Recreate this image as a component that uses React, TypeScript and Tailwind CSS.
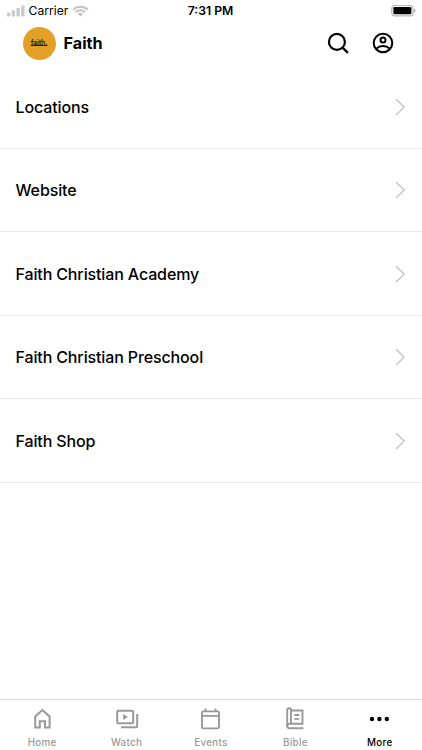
import React from "react";

const menuItems = [
  "Locations",
  "Website",
  "Faith Christian Academy",
  "Faith Christian Preschool",
  "Faith Shop",
];

const HomeIcon = () => (
  <svg width="24" height="24" viewBox="0 0 24 24" fill="none" stroke="currentColor" strokeWidth="2">
    <path d="M5.2 20.6V9.4L12.4 3l7.2 6.4v11.2H15v-6.4H9.8v6.4z" />
  </svg>
);

const WatchIcon = () => (
  <svg width="24" height="24" viewBox="0 0 24 24" fill="none" stroke="currentColor" strokeWidth="2">
    <rect x="2.2" y="3.7" width="16" height="12.6" rx="1" />
    <path d="M22.2 7v12.2a1 1 0 0 1-1 1H6" />
    <path d="M8.2 7.1v5.8l4.6-2.9z" fill="currentColor" stroke="none" />
  </svg>
);

const EventsIcon = () => (
  <svg width="24" height="24" viewBox="0 0 24 24" fill="none" stroke="currentColor" strokeWidth="1.9">
    <rect x="3" y="4.4" width="17" height="17" rx="1.4" />
    <path d="M3 8.9h17M6.5 1.4v3M16.5 1.4v3" />
  </svg>
);

const BibleIcon = () => (
  <svg width="24" height="24" viewBox="0 0 24 24" fill="none" stroke="currentColor" strokeWidth="1.9">
    <path d="M20.4 21.2H6.3a2.1 2.1 0 0 1-2.1-2.1V3.1a1.9 1.9 0 0 1 3.8 0v13.7" />
    <path d="M8 3.5h11.5v13.3H6.4A2.2 2.2 0 0 0 4.2 19" />
    <path d="M11.4 8h4.8M11.4 11.9h4.8" />
  </svg>
);

const MoreIcon = () => (
  <svg width="24" height="24" viewBox="0 0 24 24" fill="currentColor">
    <circle cx="4" cy="12" r="2.2" />
    <circle cx="11.4" cy="12" r="2.2" />
    <circle cx="18.8" cy="12" r="2.2" />
  </svg>
);

const tabs = [
  { name: "Home", icon: HomeIcon },
  { name: "Watch", icon: WatchIcon },
  { name: "Events", icon: EventsIcon },
  { name: "Bible", icon: BibleIcon },
  { name: "More", icon: MoreIcon, active: true },
];

const StatusBar = () => (
  <div className="grid h-[22px] shrink-0 grid-cols-3 items-center pl-[7px] pr-1.5">
    <div className="flex items-center">
      <svg width="18" height="12" viewBox="0 0 18 12" fill="#cbcbcb">
        <rect x="0" y="7.5" width="3.4" height="4" rx="0.8" />
        <rect x="4.7" y="5.3" width="3.4" height="6.2" rx="0.8" />
        <rect x="9.4" y="3" width="3.4" height="8.5" rx="0.8" />
        <rect x="14.1" y="0.4" width="3.4" height="11.1" rx="0.8" />
      </svg>
      <span className="ml-[3.5px] pt-px text-[12.2px]">Carrier</span>
      <svg className="ml-1" width="17" height="12" viewBox="0 0 17 12" fill="none" stroke="#c4c4c4" strokeWidth="2">
        <path d="M1.2 4.7a10.3 10.3 0 0 1 14.6 0M3.8 7.3a6.6 6.6 0 0 1 9.4 0" />
        <path d="M8.5 11.6 5.9 9a3.7 3.7 0 0 1 5.2 0z" fill="#c4c4c4" stroke="none" />
      </svg>
    </div>
    <span className="pr-0.5 pt-px text-center text-[12.2px] font-semibold">7:31 PM</span>
    <svg className="justify-self-end" width="26" height="12" viewBox="0 0 26 12">
      <rect x="1.8" y="0.5" width="21.2" height="10.4" rx="2.8" fill="none" stroke="#b5b5b5" strokeWidth="1.2" />
      <rect x="3.4" y="2.1" width="18" height="7.2" rx="1.2" fill="#000" />
      <path d="M24.3 4v3.6a2 2 0 0 0 0-3.6z" fill="#888" />
    </svg>
  </div>
);

const Header = () => (
  <header className="flex h-[43px] shrink-0 items-center pb-px pl-[22.5px] pr-[27px]">
    <div className="flex size-[33px] items-center justify-center rounded-full bg-[#e3a026]">
      <span className="text-[7.2px] font-semibold leading-none tracking-[-0.2px] text-[#2b1d05] underline decoration-[0.5px] underline-offset-0">
        faith.
      </span>
    </div>
    <h1 className="ml-2 text-[16.2px] font-bold">Faith</h1>
    <div className="ml-auto flex items-center gap-5">
      <svg width="24" height="24" viewBox="0 0 24 24" fill="none" stroke="currentColor" strokeWidth="2.2">
        <circle cx="9.9" cy="10.9" r="8" />
        <path d="m15.6 16.6 5.3 5.3" />
      </svg>
      <svg width="24" height="24" viewBox="0 0 24 24" fill="none" stroke="currentColor" strokeWidth="2">
        <circle cx="12" cy="12" r="9.3" />
        <circle cx="12" cy="9" r="2.5" />
        <path d="M5.4 17.6c3.4-3.4 9.8-3.4 13.2 0" />
      </svg>
    </div>
  </header>
);

export default function App() {
  return (
    <div className="flex h-screen w-full flex-col bg-white font-['Inter','Liberation_Sans',sans-serif] text-black">
      <StatusBar />
      <Header />
      <ul className="flex-1">
        {menuItems.map((item) => (
          <li
            key={item}
            className="flex h-[83.5px] items-center justify-between border-b border-[#e8e8e8] pl-[15.5px] pr-4 pt-px"
          >
            <span className="text-[16px] font-medium tracking-[-0.13px]">{item}</span>
            <svg width="11" height="18" viewBox="0 0 11 18" fill="none" stroke="#bdbdbd" strokeWidth="1.2">
              <path d="m1 1.2 8.2 7.9L1 17" />
            </svg>
          </li>
        ))}
      </ul>
      <nav className="grid h-[51px] shrink-0 grid-cols-5 border-t border-[#dcdcdc]">
        {tabs.map((tab) => (
          <a
            key={tab.name}
            className={
              tab.active
                ? "flex flex-col items-center pt-[7px] text-black"
                : "flex flex-col items-center pt-[7px] text-[#999999]"
            }
          >
            <tab.icon />
            <span className="mt-[5px] text-[9.8px] font-medium leading-[14px] tracking-[0.3px]">{tab.name}</span>
          </a>
        ))}
      </nav>
    </div>
  );
}
